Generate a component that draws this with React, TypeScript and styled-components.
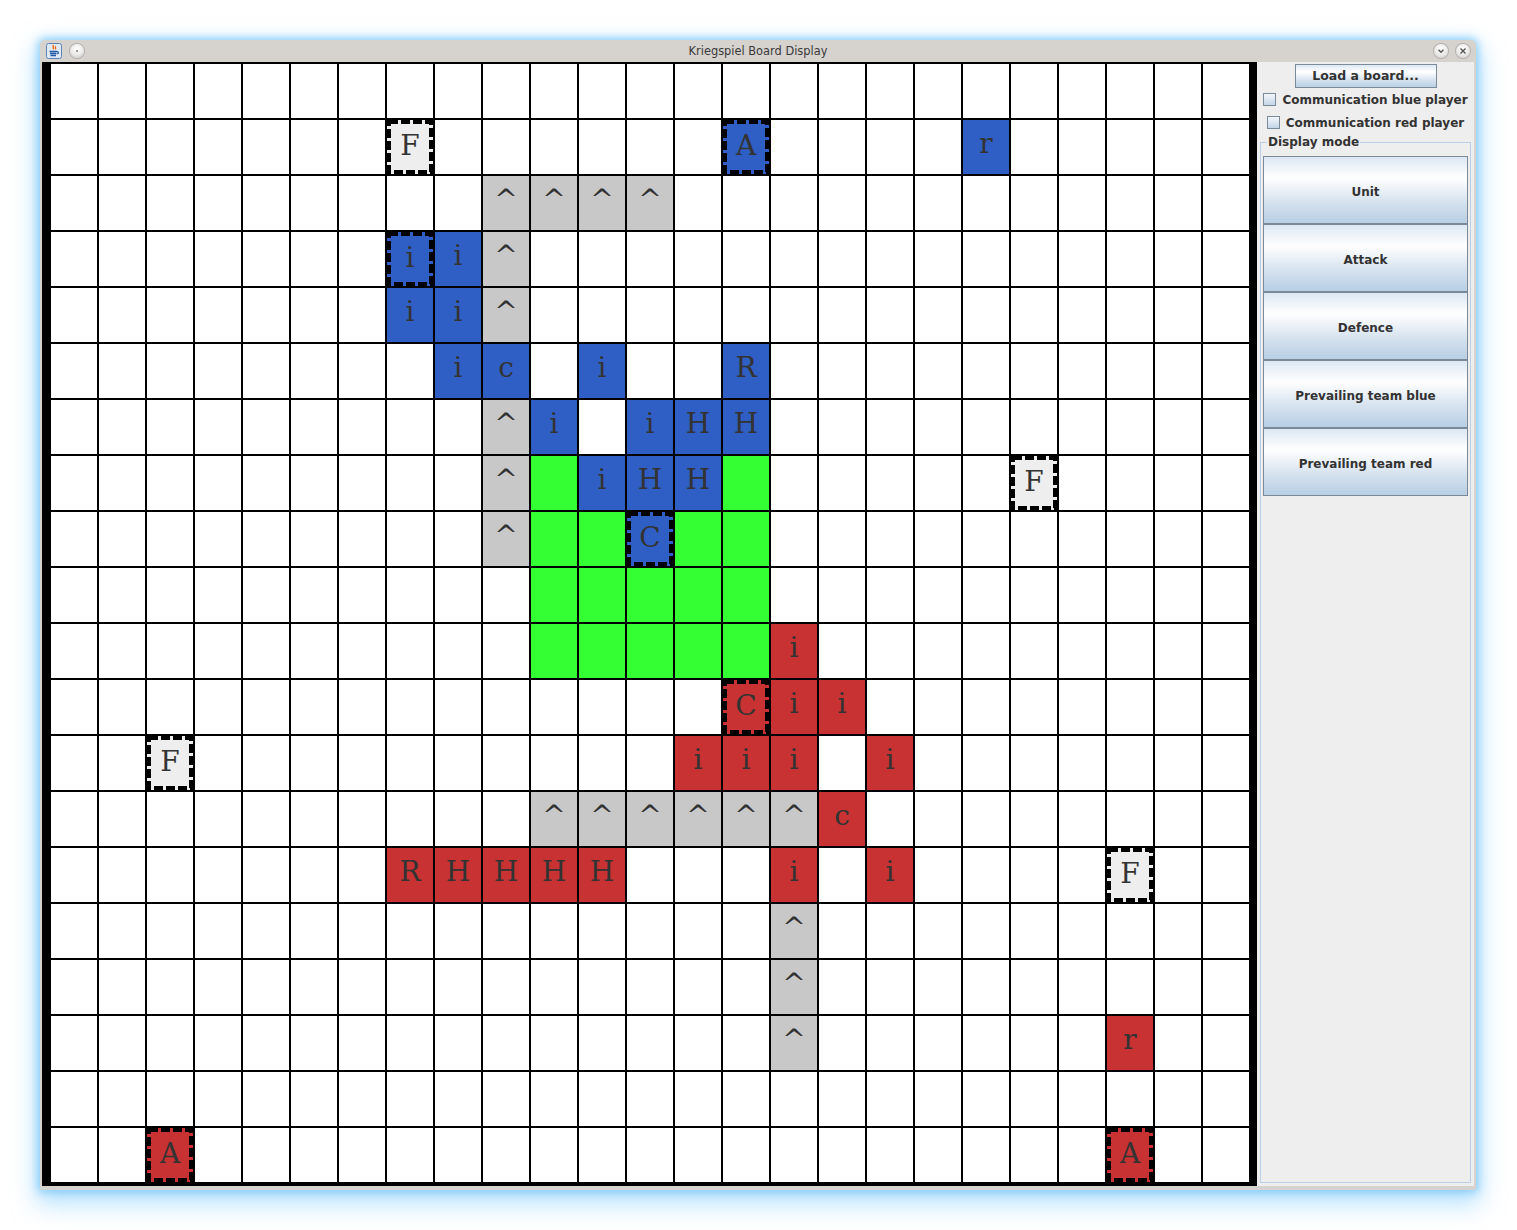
import React from 'react';
import styled, { createGlobalStyle } from 'styled-components';

type Kind = 'blue' | 'red' | 'gray' | 'green' | 'flag';

type Piece = {
    kind: Kind;
    label?: string;
    marked?: boolean;
}

const COLS = 25;
const ROWS = 20;

// [row, col, kind, label, marked]
const pieces: [number, number, Kind, string, boolean?][] = [
    [1, 7, 'flag', 'F', true],
    [1, 14, 'blue', 'A', true],
    [1, 19, 'blue', 'r'],
    [2, 9, 'gray', '^'], [2, 10, 'gray', '^'], [2, 11, 'gray', '^'], [2, 12, 'gray', '^'],
    [3, 7, 'blue', 'i', true], [3, 8, 'blue', 'i'], [3, 9, 'gray', '^'],
    [4, 7, 'blue', 'i'], [4, 8, 'blue', 'i'], [4, 9, 'gray', '^'],
    [5, 8, 'blue', 'i'], [5, 9, 'blue', 'c'], [5, 11, 'blue', 'i'], [5, 14, 'blue', 'R'],
    [6, 9, 'gray', '^'], [6, 10, 'blue', 'i'], [6, 12, 'blue', 'i'], [6, 13, 'blue', 'H'], [6, 14, 'blue', 'H'],
    [7, 9, 'gray', '^'], [7, 10, 'green', ''], [7, 11, 'blue', 'i'], [7, 12, 'blue', 'H'], [7, 13, 'blue', 'H'], [7, 14, 'green', ''],
    [7, 20, 'flag', 'F', true],
    [8, 9, 'gray', '^'], [8, 10, 'green', ''], [8, 11, 'green', ''], [8, 12, 'blue', 'C', true], [8, 13, 'green', ''], [8, 14, 'green', ''],
    [9, 10, 'green', ''], [9, 11, 'green', ''], [9, 12, 'green', ''], [9, 13, 'green', ''], [9, 14, 'green', ''],
    [10, 10, 'green', ''], [10, 11, 'green', ''], [10, 12, 'green', ''], [10, 13, 'green', ''], [10, 14, 'green', ''],
    [10, 15, 'red', 'i'],
    [11, 14, 'red', 'C', true], [11, 15, 'red', 'i'], [11, 16, 'red', 'i'],
    [12, 2, 'flag', 'F', true],
    [12, 13, 'red', 'i'], [12, 14, 'red', 'i'], [12, 15, 'red', 'i'], [12, 17, 'red', 'i'],
    [13, 10, 'gray', '^'], [13, 11, 'gray', '^'], [13, 12, 'gray', '^'], [13, 13, 'gray', '^'], [13, 14, 'gray', '^'], [13, 15, 'gray', '^'],
    [13, 16, 'red', 'c'],
    [14, 7, 'red', 'R'], [14, 8, 'red', 'H'], [14, 9, 'red', 'H'], [14, 10, 'red', 'H'], [14, 11, 'red', 'H'],
    [14, 15, 'red', 'i'], [14, 17, 'red', 'i'], [14, 22, 'flag', 'F', true],
    [15, 15, 'gray', '^'],
    [16, 15, 'gray', '^'],
    [17, 15, 'gray', '^'], [17, 22, 'red', 'r'],
    [19, 2, 'red', 'A', true], [19, 22, 'red', 'A', true],
];

const boardMap = new Map<string, Piece>();
pieces.forEach(([r, c, kind, label, marked]) => {
    boardMap.set(`${r}-${c}`, { kind, label, marked });
});

const cellColors: Record<Kind | 'empty', string> = {
    empty: '#ffffff',
    blue: '#2f5fc4',
    red: '#c83232',
    gray: '#c8c8c8',
    green: '#33ff33',
    flag: '#eeeeee',
};

const modes = ['Unit', 'Attack', 'Defence', 'Prevailing team blue', 'Prevailing team red'];

const GlobalStyle = createGlobalStyle`
    body {
        margin: 0;
        background: #ffffff;
        font-family: "DejaVu Sans", "Liberation Sans", sans-serif;
    }
`;

const Page = styled.div`
    padding: 40px 0 40px 40px;
`;

const Window = styled.div`
    width: 1436px;
    background: #d6d2ce;
    border-radius: 5px 5px 2px 2px;
    box-shadow: 0 0 8px 2px rgba(110, 195, 250, 0.75), 0 10px 24px 4px rgba(120, 200, 250, 0.55);
`;

const TitleBar = styled.div`
    height: 22px;
    display: grid;
    grid-template-columns: 1fr auto 1fr;
    align-items: center;
    padding: 0 6px;
`;

const TitleText = styled.div`
    font-size: 11.4px;
    color: #3a3a3a;
`;

const TitleGroup = styled.div<{ $end?: boolean }>`
    display: flex;
    align-items: center;
    gap: 8px;
    justify-content: ${p => (p.$end ? 'flex-end' : 'flex-start')};
`;

const RoundButton = styled.div`
    width: 14px;
    height: 14px;
    border-radius: 50%;
    background: radial-gradient(circle at 50% 35%, #ffffff 0%, #ecebea 50%, #c9c6c3 100%);
    box-shadow: 0 0 0 1px #b3b0ad;
    display: flex;
    align-items: center;
    justify-content: center;
`;

const Body = styled.div`
    display: flex;
    padding: 0 2px 4px 2px;
`;

const Board = styled.div`
    display: grid;
    grid-template-columns: repeat(${COLS}, 46px);
    grid-auto-rows: 54px;
    gap: 2px;
    background: #000000;
    padding: 2px 8px 4px 9px;
`;

const Cell = styled.div<{ $kind: Kind | 'empty'; $marked?: boolean }>`
    position: relative;
    background: ${p => cellColors[p.$kind]};
    font-family: "DejaVu Serif", "Liberation Serif", serif;
    font-size: 28px;
    line-height: ${p => (p.$marked ? 52 : 47)}px;
    text-align: center;
    color: #333333;
`;

const Dashes = styled.svg`
    position: absolute;
    inset: 0;
    width: 100%;
    height: 100%;
`;

const Side = styled.div`
    flex: 1;
    background: #eeeeee;
    display: flex;
    flex-direction: column;
    align-items: center;
    padding-top: 2px;
    font-size: 12px;
    font-weight: bold;
    color: #333333;
`;

const gradient = `linear-gradient(to bottom, #dde8f3 0%, #ffffff 32%, #d4e1ee 70%, #b8cfe5 100%)`;

const LoadButton = styled.button`
    width: 142px;
    height: 24px;
    border: 1px solid #7a8a99;
    background: ${gradient};
    font: inherit;
    font-size: 12.5px;
    color: #333333;
    padding: 0 0 1px 0;
`;

const CheckRow = styled.label`
    display: flex;
    align-items: center;
    gap: 6px;
    height: 23px;
`;

const Box = styled.span`
    width: 11px;
    height: 11px;
    border: 1px solid #7a8a99;
    background: linear-gradient(to bottom, #f4f7fb, #c3d5e8);
`;

const ModeSet = styled.fieldset`
    align-self: stretch;
    flex: 1;
    margin: 1px 3px 3px 3px;
    padding: 7px 2px 2px 2px;
    border: 1px solid #b8cfe5;
    display: flex;
    flex-direction: column;
    min-height: 0;
`;

const Legend = styled.legend`
    padding: 0 1px;
    margin-left: 4px;
    font-size: 12px;
`;

const ModeButton = styled.button`
    height: 68px;
    border: 1px solid #7a8a99;
    background: ${gradient};
    font: inherit;
    color: #333333;
    padding: 4px 0 0 0;
`;

const JavaIcon = () => (
    <svg width="16" height="16" viewBox="0 0 16 16">
        <rect x="0.5" y="0.5" width="15" height="15" rx="2" fill="#dfe9f5" stroke="#5b83b8" />
        <path d="M7.5 2c-1.6 1.6 1.2 2.4-0.6 4.4M9.6 3.2c-1.1 1.1 0.9 1.6-0.4 3.2" stroke="#ee6a10" strokeWidth="1.4" fill="none" />
        <path d="M3.5 8.5h7.5M4 10.5h6.5M4.5 12.5h5.5" stroke="#1f5aa8" strokeWidth="1.3" />
        <path d="M11 8.6c2 0 2 2.2 0 2.2" stroke="#1f5aa8" strokeWidth="1.1" fill="none" />
    </svg>
);

const Board2D = () => {
    const cells = [];
    for (let r = 0; r < ROWS; r++) {
        for (let c = 0; c < COLS; c++) {
            const piece = boardMap.get(`${r}-${c}`);
            cells.push(
                <Cell key={`${r}-${c}`} $kind={piece ? piece.kind : 'empty'} $marked={piece?.marked}>
                    {piece?.label}
                    {piece?.marked && (
                        <Dashes viewBox="0 0 46 54">
                            <rect x="2" y="2" width="42" height="50" fill="none" stroke="#000" strokeWidth="4" strokeDasharray="9 3" />
                        </Dashes>
                    )}
                </Cell>
            );
        }
    }
    return <Board>{cells}</Board>;
};

export default function App() {
    return (
        <Page>
            <GlobalStyle />
            <Window>
                <TitleBar>
                    <TitleGroup>
                        <JavaIcon />
                        <RoundButton>
                            <svg width="4" height="4" viewBox="0 0 4 4"><circle cx="2" cy="2" r="1" fill="#777" /></svg>
                        </RoundButton>
                    </TitleGroup>
                    <TitleText>Kriegspiel Board Display</TitleText>
                    <TitleGroup $end>
                        <RoundButton>
                            <svg width="8" height="8" viewBox="0 0 8 8"><path d="M1.5 2.8L4 5.3 6.5 2.8" stroke="#555" strokeWidth="1.4" fill="none" /></svg>
                        </RoundButton>
                        <RoundButton>
                            <svg width="8" height="8" viewBox="0 0 8 8"><path d="M1.5 1.5L6.5 6.5M6.5 1.5L1.5 6.5" stroke="#555" strokeWidth="1.4" /></svg>
                        </RoundButton>
                    </TitleGroup>
                </TitleBar>
                <Body>
                    <Board2D />
                    <Side>
                        <LoadButton>Load a board...</LoadButton>
                        <CheckRow><Box />Communication blue player</CheckRow>
                        <CheckRow><Box />Communication red player</CheckRow>
                        <ModeSet>
                            <Legend>Display mode</Legend>
                            {modes.map(m => (
                                <ModeButton key={m}>{m}</ModeButton>
                            ))}
                        </ModeSet>
                    </Side>
                </Body>
            </Window>
        </Page>
    );
}
